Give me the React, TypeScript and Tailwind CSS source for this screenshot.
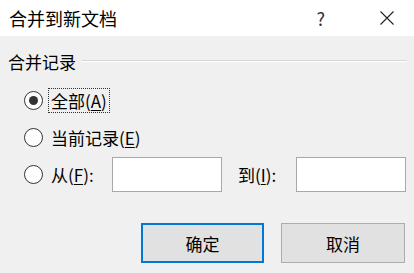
import React from 'react';

const font = { fontFamily: '"Noto Sans CJK SC", "Noto Sans", sans-serif' };

function Radio({ checked }: { checked?: boolean }) {
  return (
    <span className="flex items-center justify-center w-[19px] h-[19px] rounded-full border border-[#333333] bg-white shrink-0">
      {checked && <span className="w-[9px] h-[9px] rounded-full bg-[#333333]" />}
    </span>
  );
}

export default function App() {
  return (
    <div className="w-[414px] h-[273px] bg-[#f0f0f0] text-[#000] overflow-hidden" style={font}>
      {/* title bar */}
      <div className="h-[36px] bg-white flex items-center">
        <span className="pl-[9px] text-[18px] leading-none">合并到新文档</span>
        <span className="ml-auto mr-[55px] text-[18px] leading-none text-[#333]">?</span>
        <svg className="mr-[20px]" width="14" height="14" viewBox="0 0 14 14">
          <path d="M0.5 0.5 L13.5 13.5 M13.5 0.5 L0.5 13.5" stroke="#222" strokeWidth="1.1" />
        </svg>
      </div>

      {/* group header */}
      <div className="mt-[15px] h-[20px] flex items-center pl-[8px] pr-[7px]">
        <span className="text-[17px] leading-none">合并记录</span>
        <div className="flex-1 ml-[6px] mt-[-1px] flex flex-col">
          <div className="h-px bg-[#d5d5d5]" />
          <div className="h-px bg-white" />
        </div>
      </div>

      {/* radios */}
      <div className="mt-[17px] h-[25px] flex items-center pl-[24px]">
        <Radio checked />
        <span className="ml-[5px] px-[2px] h-[25px] flex items-center border border-dotted border-[#333] text-[17px] leading-none">
          全部(<span className="underline underline-offset-2">A</span>)
        </span>
      </div>

      <div className="mt-[12px] h-[25px] flex items-center pl-[24px]">
        <Radio />
        <span className="ml-[8px] text-[17px] leading-none">
          当前记录(<span className="underline underline-offset-2">E</span>)
        </span>
      </div>

      <div className="mt-[7px] h-[35px] flex items-center pl-[24px]">
        <Radio />
        <span className="ml-[8px] w-[61px] text-[17px] leading-none">
          从(<span className="underline underline-offset-2">F</span>):
        </span>
        <div className="w-[110px] h-[35px] bg-white border border-[#a8a8a8]" />
        <span className="ml-[16px] w-[58px] text-[17px] leading-none">
          到(<span className="underline underline-offset-2">I</span>):
        </span>
        <div className="w-[110px] h-[35px] bg-white border border-[#a8a8a8]" />
      </div>

      {/* buttons */}
      <div className="mt-[31px] flex justify-end gap-[17px] pr-[9px]">
        <button className="w-[123px] h-[40px] bg-[#e1e1e1] border-2 border-[#0078d7] text-[17px] leading-none">
          确定
        </button>
        <button className="w-[124px] h-[40px] bg-[#e1e1e1] border border-[#adadad] text-[17px] leading-none">
          取消
        </button>
      </div>
    </div>
  );
}
